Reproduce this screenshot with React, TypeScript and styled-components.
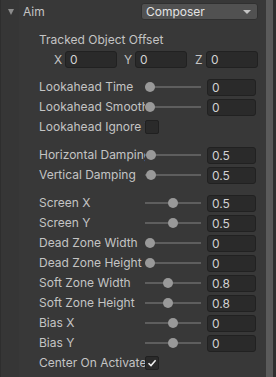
import * as React from "react";
import styled, { createGlobalStyle } from "styled-components";

const Global = createGlobalStyle`
  html, body {
    margin: 0;
    padding: 0;
    background: #383838;
  }
  * {
    box-sizing: border-box;
  }
`;

const Window = styled.div`
  width: 276px;
  height: 377px;
  display: flex;
  overflow: hidden;
  background: #383838;
  font-family: Inter, "Noto Sans", sans-serif;
  font-size: 12px;
  color: #c4c4c4;
`;

const Panel = styled.div`
  flex: 1;
  display: flex;
  flex-direction: column;
  padding: 3px 8px 0 0;
  border-left: 1px solid #2e2e2e;
  background: linear-gradient(to right, #363636 0, #363636 18px, #383838 18px);
`;

const ScrollTrack = styled.div`
  width: 12px;
  background: #2f2f2f;
  display: flex;
`;

const ScrollThumb = styled.div`
  width: 7px;
  height: 100%;
  background: #5a5a5a;
`;

const Header = styled.div`
  display: flex;
  align-items: center;
  height: 17px;
  padding-left: 7px;
`;

const Foldout = styled.div`
  width: 0;
  height: 0;
  border-left: 3.5px solid transparent;
  border-right: 3.5px solid transparent;
  border-top: 6px solid #8c8c8c;
  margin-right: 9px;
`;

const HeaderLabel = styled.span`
  flex: 1;
  line-height: 17px;
`;

const Dropdown = styled.div`
  width: 117px;
  height: 17px;
  display: flex;
  align-items: center;
  justify-content: space-between;
  padding: 0 6px 0 4px;
  background: #515151;
  border: 1px solid #303030;
  border-radius: 3px;
  color: #e4e4e4;
`;

const Caret = styled.div`
  width: 0;
  height: 0;
  border-left: 4px solid transparent;
  border-right: 4px solid transparent;
  border-top: 4px solid #c4c4c4;
`;

const Body = styled.div`
  display: flex;
  flex-direction: column;
  padding-left: 38px;
  margin-top: 11px;
`;

const Caption = styled.div`
  height: 18px;
  line-height: 18px;
`;

const VectorRow = styled.div`
  display: flex;
  align-items: center;
  height: 18px;
  margin-top: 1px;
  padding-left: 15px;
  gap: 3px;
`;

const AxisLabel = styled.span<{ $gap: number }>`
  margin-left: ${(p) => p.$gap}px;
  width: 8px;
`;

const Field = styled.div<{ $w: number }>`
  width: ${(p) => p.$w}px;
  height: 17px;
  line-height: 15px;
  padding-left: 4px;
  background: #2a2a2a;
  border: 1px solid #212121;
  border-radius: 3px;
  color: #d2d2d2;
`;

const Group = styled.div<{ $top: number }>`
  display: flex;
  flex-direction: column;
  gap: 2px;
  margin-top: ${(p) => p.$top}px;
`;

const Row = styled.div`
  display: flex;
  align-items: center;
  height: 18px;
`;

const Label = styled.div`
  width: 106px;
  overflow: hidden;
  white-space: nowrap;
  line-height: 18px;
`;

const Slider = styled.div`
  position: relative;
  width: 56px;
  height: 10px;
  margin-right: 6px;
`;

const Track = styled.div`
  position: absolute;
  left: 0;
  right: 0;
  top: 4px;
  height: 2px;
  background: #5e5e5e;
`;

const Knob = styled.div`
  position: absolute;
  top: 0;
  width: 10px;
  height: 10px;
  border-radius: 50%;
  background: #999999;
`;

const Check = styled.div`
  width: 14px;
  height: 14px;
  background: #2a2a2a;
  border: 1px solid #202020;
  border-radius: 2px;
  display: flex;
  align-items: center;
  justify-content: center;
`;

type SliderSpec = { label: string; value: number; min: number; max: number };

const SliderRow: React.FC<SliderSpec> = ({ label, value, min, max }) => {
  const t = (value - min) / (max - min);
  return (
    <Row>
      <Label>{label}</Label>
      <Slider>
        <Track />
        <Knob style={{ left: Math.round(t * 46) }} />
      </Slider>
      <Field $w={49}>{value}</Field>
    </Row>
  );
};

const Toggle: React.FC<{ label: string; on?: boolean }> = ({ label, on }) => (
  <Row>
    <Label>{label}</Label>
    <Check>
      {on && (
        <svg width="10" height="10" viewBox="0 0 10 10">
          <path d="M1.5 5.2 L4 7.6 L8.6 2.2" fill="none" stroke="#f0f0f0" strokeWidth="1.5" />
        </svg>
      )}
    </Check>
  </Row>
);

const App: React.FC = () => {
  return (
    <>
      <Global />
      <Window>
        <Panel>
          <Header>
            <Foldout />
            <HeaderLabel>Aim</HeaderLabel>
            <Dropdown>
              <span>Composer</span>
              <Caret />
            </Dropdown>
          </Header>
          <Body>
            <Caption>Tracked Object Offset</Caption>
            <VectorRow>
              <AxisLabel $gap={0}>X</AxisLabel>
              <Field $w={52}>0</Field>
              <AxisLabel $gap={4}>Y</AxisLabel>
              <Field $w={52}>0</Field>
              <AxisLabel $gap={5}>Z</AxisLabel>
              <Field $w={52}>0</Field>
            </VectorRow>

            <Group $top={10}>
              <SliderRow label="Lookahead Time" value={0} min={0} max={1} />
              <SliderRow label="Lookahead Smoothing" value={0} min={0} max={30} />
              <Toggle label="Lookahead Ignore Y" />
            </Group>

            <Group $top={10}>
              <SliderRow label="Horizontal Damping" value={0.5} min={0} max={20} />
              <SliderRow label="Vertical Damping" value={0.5} min={0} max={20} />
            </Group>

            <Group $top={10}>
              <SliderRow label="Screen X" value={0.5} min={0} max={1} />
              <SliderRow label="Screen Y" value={0.5} min={0} max={1} />
              <SliderRow label="Dead Zone Width" value={0} min={0} max={2} />
              <SliderRow label="Dead Zone Height" value={0} min={0} max={2} />
              <SliderRow label="Soft Zone Width" value={0.8} min={0} max={2} />
              <SliderRow label="Soft Zone Height" value={0.8} min={0} max={2} />
              <SliderRow label="Bias X" value={0} min={-0.5} max={0.5} />
              <SliderRow label="Bias Y" value={0} min={-0.5} max={0.5} />
              <Toggle label="Center On Activate" on />
            </Group>
          </Body>
        </Panel>
        <ScrollTrack>
          <ScrollThumb />
        </ScrollTrack>
      </Window>
    </>
  );
};

export default App;
